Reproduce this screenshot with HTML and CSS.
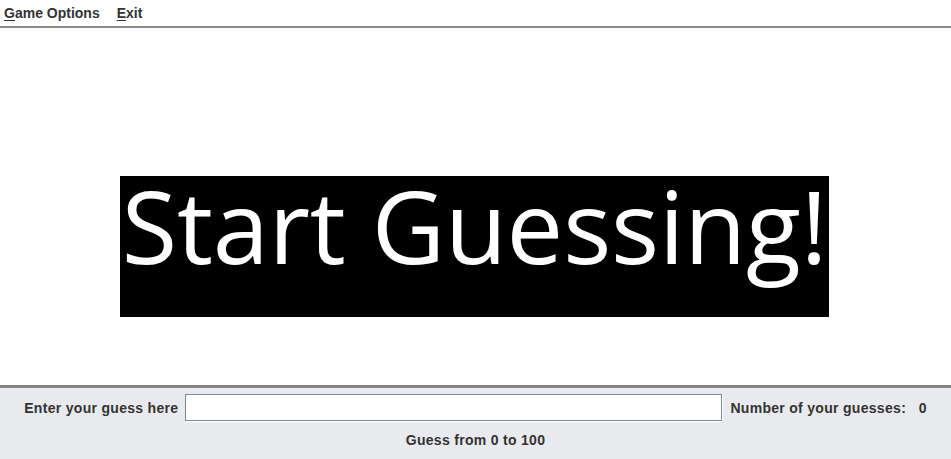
FILE: index.html
```html
<!DOCTYPE html>
<html>
<head>
<meta charset="utf-8">
<link rel="stylesheet" href="styles.css">
</head>
<body>
<div class="app">
  <div class="menubar">
    <span class="menu"><u>G</u>ame Options</span>
    <span class="menu"><u>E</u>xit</span>
  </div>
  <div class="main">
    <div class="banner">Start Guessing!</div>
  </div>
  <div class="bottom">
    <div class="row">
      <span class="label">Enter your guess here</span>
      <input class="guess" type="text">
      <span class="label count">Number of your guesses:&nbsp;&nbsp; 0</span>
    </div>
    <div class="hint">Guess from 0 to 100</div>
  </div>
</div>
</body>
</html>
```
FILE: styles.css
```css
html, body {
  margin: 0;
  padding: 0;
  background: #ffffff;
}
.app {
  width: 951px;
  height: 459px;
  display: flex;
  flex-direction: column;
  font-family: "Liberation Sans", Arial, sans-serif;
  font-weight: bold;
  font-size: 14px;
  color: #333333;
}
.menubar {
  height: 26px;
  display: flex;
  align-items: center;
  gap: 17px;
  padding-left: 4px;
  border-bottom: 2px solid #8a8a8a;
  background: #ffffff;
}
.menu u {
  text-decoration-thickness: 1px;
  text-underline-offset: 2px;
}
.main {
  flex: 1;
  display: flex;
  justify-content: flex-start;
  align-items: flex-start;
  padding-top: 148px;
  padding-left: 120px;
}
.banner {
  width: 709px;
  height: 141px;
  padding-top: 2px;
  box-sizing: border-box;
  background: #000000;
  color: #ffffff;
  font-family: "Open Sans", sans-serif;
  font-weight: normal;
  font-size: 101px;
  letter-spacing: -0.2px;
  line-height: 94px;
  text-align: center;
  white-space: nowrap;
}
.bottom {
  height: 71px;
  border-top: 3px solid #858585;
  background: #e9eaee;
  display: flex;
  flex-direction: column;
  align-items: center;
  letter-spacing: 0.3px;
}
.row {
  display: flex;
  align-items: center;
  gap: 7px;
  margin-top: 6px;
  height: 28px;
}
.guess {
  width: 537px;
  height: 27px;
  box-sizing: border-box;
  border: 1px solid #7a8a99;
  box-shadow: 1px 1px 0 #ffffff;
  background: #ffffff;
  margin: 0 1px 1px 0;
  padding: 0;
  outline: none;
}
.hint {
  margin-top: 10px;
  line-height: 16px;
}
```
